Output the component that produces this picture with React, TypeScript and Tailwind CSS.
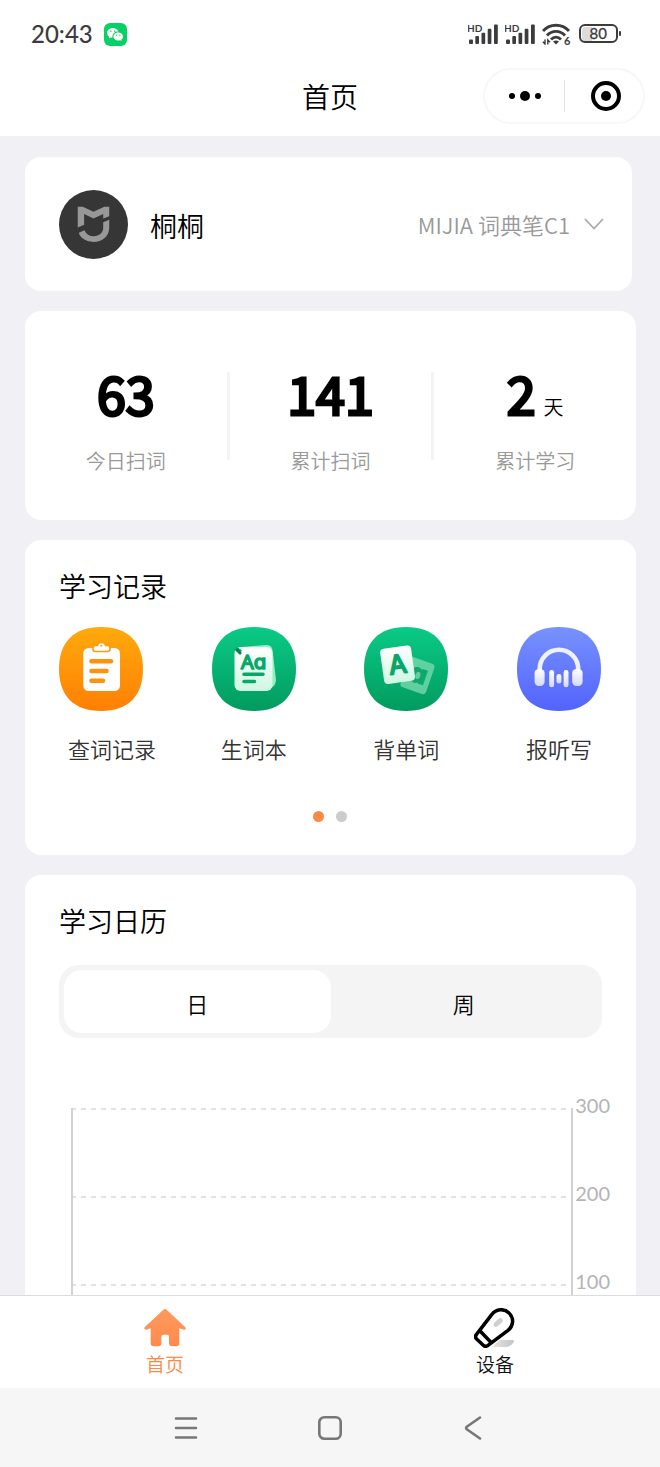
import React, { useState } from "react";
import { BsWechat } from "react-icons/bs";

const SQUIRCLE =
  "M42 0 C69 0 84 15 84 42 C84 69 69 84 42 84 C15 84 0 69 0 42 C0 15 15 0 42 0 Z";

const SignalIcon: React.FC = () => (
  <svg className="w-[30px] h-[22px]" viewBox="0 0 30 22" fill="#3c3c3e">
    <text x="-1" y="8.5" fontSize="10" fontWeight="700" fontFamily="Lato, sans-serif">
      HD
    </text>
    <rect x="1" y="16.5" width="4" height="4.5" rx="1" />
    <rect x="7.3" y="13" width="3.7" height="8" rx="1" />
    <rect x="13.5" y="9.7" width="3.7" height="11.3" rx="1" />
    <rect x="19.7" y="5.7" width="3.7" height="15.3" rx="1" />
    <rect x="26" y="1.5" width="3.8" height="19.5" rx="1" />
  </svg>
);

const WifiIcon: React.FC = () => (
  <svg className="w-[30px] h-[22px]" viewBox="0 0 30 22" fill="none" stroke="#3c3c3e" strokeWidth="2.8">
    <path d="M1 8 C8 0.3 20 0.3 27 8" />
    <path d="M5 12.5 C10 7 18 7 23 12.5" />
    <path d="M9 16.5 C12 13.3 16 13.3 19 16.5" />
    <path d="M11 18.5 Q14 16.4 17 18.5 L14 21.5 Z" fill="#3c3c3e" stroke="none" />
    <path d="M3 16.5 V21 L0.8 18.8 M5.8 21.5 V17 L8 19.2" strokeWidth="1.4" />
    <text x="22" y="21.5" fontSize="11" fontWeight="700" fill="#3c3c3e" stroke="none" fontFamily="Lato, sans-serif">
      6
    </text>
  </svg>
);

const BatteryIcon: React.FC = () => (
  <svg className="w-[43px] h-[20px]" viewBox="0 0 43 20">
    <path d="M6 3 H13 V17 H6 Q3 17 3 14 V6 Q3 3 6 3 Z" fill="#dcdcdc" />
    <rect x="1" y="1" width="37" height="17" rx="5" fill="none" stroke="#3c3c3e" strokeWidth="2" />
    <rect x="40" y="7" width="2" height="5" rx="1" fill="#3c3c3e" />
    <text
      x="19.3"
      y="15"
      fontSize="15"
      fontWeight="400"
      textAnchor="middle"
      fill="#3c3c3e"
      stroke="#3c3c3e"
      strokeWidth="0.3"
      fontFamily="Lato, sans-serif"
    >
      80
    </text>
  </svg>
);

const MijiaLogo: React.FC = () => (
  <svg className="w-[69px] h-[69px] shrink-0" viewBox="117 118 206 206">
    <circle cx="220" cy="221" r="103" fill="#363636" />
    <g fill="#989898">
      <path d="M173 168 H188 L220 183 L252 168 H267 V196 L249 203 V190 L220 203 L192 190 V222 L173 230 Z" />
      <path d="M249 214 L267 207 V230 C267 257 246 273 220 273 C198 273 181 262 176 246 L193 238 C198 250 208 256 220 256 C238 256 249 246 249 230 Z" />
    </g>
  </svg>
);

const RecordIcon: React.FC = () => (
  <svg className="w-[84px] h-[84px]" viewBox="0 0 84 84">
    <defs>
      <linearGradient id="orange" x1="0" y1="0" x2="0" y2="1">
        <stop offset="0" stopColor="#ffaa0c" />
        <stop offset="1" stopColor="#ff7f04" />
      </linearGradient>
    </defs>
    <path d={SQUIRCLE} fill="url(#orange)" />
    <rect x="24.3" y="21" width="36.7" height="43" rx="5.5" fill="#fff" />
    <path
      d="M36.5 18.5 H38.5 C39 14.5 46 14.5 46.5 18.5 H48.5 Q51 18.5 51 21 V22 Q51 24.5 48.5 24.5 H36.5 Q34 24.5 34 22 V21 Q34 18.5 36.5 18.5 Z"
      fill="#fff"
      stroke="#ff9c0b"
      strokeWidth="1.6"
    />
    <circle cx="42.4" cy="18.8" r="1" fill="#ff9c0b" />
    <path d="M32.5 34.2 H52 M32.5 44 H47.5 M32.5 53.8 H44" stroke="#ff920a" strokeWidth="4.6" strokeLinecap="round" />
  </svg>
);

const WordBookIcon: React.FC = () => (
  <svg className="w-[84px] h-[84px]" viewBox="0 0 84 84">
    <defs>
      <linearGradient id="green" x1="0" y1="0" x2="0" y2="1">
        <stop offset="0" stopColor="#0acb86" />
        <stop offset="1" stopColor="#029a5f" />
      </linearGradient>
      <linearGradient id="sheet" x1="0" y1="0" x2="0" y2="1">
        <stop offset="0" stopColor="#ffffff" />
        <stop offset="1" stopColor="#cdf8e2" />
      </linearGradient>
    </defs>
    <path d={SQUIRCLE} fill="url(#green)" />
    <path d="M30 20 L54 18 Q60 18 60.5 23 L64 53 Q64 58 59 61 L48 63 Z" fill="#8ff0c0" />
    <rect x="22.5" y="20" width="38" height="44" rx="6" fill="url(#sheet)" />
    <path d="M21.5 22 L24 19 L30 23.5 L27.5 27 Z" fill="#07b877" />
    <path d="M25.2 22.8 L28 26" stroke="#04804f" strokeWidth="3" strokeLinecap="round" />
    <text
      x="29"
      y="42"
      fontSize="20"
      fontWeight="400"
      fill="#08a869"
      stroke="#08a869"
      strokeWidth="1.6"
      strokeLinejoin="round"
      fontFamily="'Open Sans', 'DejaVu Sans', sans-serif"
    >
      Aɑ
    </text>
    <path d="M32 47.3 H51 M32 54.5 H42.5" stroke="#08a869" strokeWidth="3.6" strokeLinecap="round" />
  </svg>
);

const FlashCardIcon: React.FC = () => (
  <svg className="w-[84px] h-[84px]" viewBox="0 0 84 84">
    <path d={SQUIRCLE} fill="url(#green)" />
    <g transform="rotate(19 53.5 48.5)">
      <rect x="40" y="32.5" width="27" height="32" rx="3.5" fill="#7ddcb0" fillOpacity="0.75" />
      <text
        x="54"
        y="55.5"
        fontSize="26"
        fontWeight="700"
        textAnchor="middle"
        fill="#10a76b"
        stroke="#10a76b"
        strokeWidth="1"
        fontFamily="'Open Sans', 'DejaVu Sans', sans-serif"
      >
        ɑ
      </text>
    </g>
    <g transform="rotate(-8 33.6 37.7)">
      <rect x="18" y="20" width="31.2" height="35.5" rx="4" fill="url(#sheet)" />
      <text
        x="33.6"
        y="46.5"
        fontSize="26"
        fontWeight="400"
        textAnchor="middle"
        fill="#0aa568"
        stroke="#0aa568"
        strokeWidth="1.8"
        strokeLinejoin="round"
        fontFamily="Inter, sans-serif"
      >
        A
      </text>
    </g>
  </svg>
);

const DictationIcon: React.FC = () => (
  <svg className="w-[84px] h-[84px]" viewBox="0 0 84 84">
    <defs>
      <linearGradient id="blue" x1="0" y1="0" x2="0" y2="1">
        <stop offset="0" stopColor="#7892fd" />
        <stop offset="1" stopColor="#5263fd" />
      </linearGradient>
      <linearGradient id="cup" x1="0" y1="0" x2="0" y2="1">
        <stop offset="0" stopColor="#ffffff" />
        <stop offset="1" stopColor="#d3d9ff" />
      </linearGradient>
    </defs>
    <path d={SQUIRCLE} fill="url(#blue)" />
    <path d="M22.7 45 V42 A19.2 19.2 0 0 1 61.2 42 V45" fill="none" stroke="#eef1ff" strokeWidth="4.6" />
    <g fill="url(#cup)">
      <rect x="17.6" y="42" width="10" height="17" rx="4.2" />
      <rect x="55.2" y="42" width="10.4" height="17" rx="4.2" />
      <rect x="32.2" y="43" width="4.9" height="17.3" rx="2.4" />
      <rect x="39.5" y="47" width="4.9" height="9.6" rx="2.4" />
      <rect x="46.6" y="43" width="4.9" height="17.3" rx="2.4" />
    </g>
  </svg>
);

const HomeIcon: React.FC = () => (
  <svg className="w-[42px] h-[40px]" viewBox="132 54 126 120">
    <defs>
      <linearGradient id="home" x1="0" y1="0" x2="0" y2="1">
        <stop offset="0" stopColor="#ff9a60" />
        <stop offset="1" stopColor="#ff8a4c" />
      </linearGradient>
    </defs>
    <path
      d="M190 59 Q195 55 200 59 L256 112 Q260 119 252 119 L238 115 V159 Q238 169 228 169 H216 Q207 169 207 160 V140 Q207 134 201 134 H190 Q184 134 184 140 V160 Q184 169 175 169 H162 Q152 169 152 159 V115 L139 119 Q130 119 134 112 Z"
      fill="url(#home)"
    />
  </svg>
);

const PenIcon: React.FC = () => (
  <svg className="w-[42px] h-[40px]" viewBox="1124 54 126 120" fill="none">
    <defs>
      <linearGradient id="shade" x1="0" y1="0" x2="1" y2="0">
        <stop offset="0" stopColor="#e6e6e6" />
        <stop offset="1" stopColor="#c4c4c4" />
      </linearGradient>
    </defs>
    <path d="M1178 170 L1202 150 H1240 Q1246 150 1243 157 Q1236 170 1218 171 Z" fill="url(#shade)" />
    <path d="M1190 103 L1203 92" stroke="#d0d0d0" strokeWidth="15" strokeLinecap="round" />
    <g stroke="#000" strokeWidth="10.5" strokeLinejoin="round" strokeLinecap="round">
      <path d="M1131 134 L1177 74 C1190 56 1215 54 1230 70 C1245 86 1242 108 1226 121 L1166 166 C1161 170 1155 169 1151 165 L1132 147 C1128 143 1128 138 1131 134 Z" />
      <path d="M1143 124 L1174 156" />
    </g>
  </svg>
);

const STATS = [
  { value: "63", unit: "", label: "今日扫词" },
  { value: "141", unit: "", label: "累计扫词" },
  { value: "2", unit: "天", label: "累计学习" },
];

const SHORTCUTS = [
  { label: "查词记录", Icon: RecordIcon },
  { label: "生词本", Icon: WordBookIcon },
  { label: "背单词", Icon: FlashCardIcon },
  { label: "报听写", Icon: DictationIcon },
];

const TICKS = [300, 200, 100];

const Header: React.FC = () => (
  <header className="bg-white pb-3 shrink-0">
    <div className="h-[68px] flex items-center justify-between pl-[31px] pr-[38px]">
      <div className="flex items-center gap-[11px]">
        <span className="font-[Lato] text-[24px] leading-8 font-medium text-[#3c3c3e]">20:43</span>
        <span className="w-[23px] h-[23px] rounded-md bg-[#07d166] text-white flex items-center justify-center">
          <BsWechat className="w-4 h-4" />
        </span>
      </div>
      <div className="flex items-center gap-[7px]">
        <SignalIcon />
        <SignalIcon />
        <WifiIcon />
        <BatteryIcon />
      </div>
    </div>
    <div className="grid grid-cols-[1fr_auto_1fr] items-center pr-[15px]">
      <h1 className="col-start-2 pl-[15px] text-[28px] leading-10">首页</h1>
      <div className="justify-self-end h-14 w-[162px] rounded-full border-2 border-[#f7f7f7] flex items-center">
        <button aria-label="更多" className="w-[79px] flex items-center justify-center gap-[5px]">
          <span className="w-1.5 h-1.5 rounded-full bg-black" />
          <span className="w-2.5 h-2.5 rounded-full bg-black" />
          <span className="w-1.5 h-1.5 rounded-full bg-black" />
        </button>
        <span className="w-px h-8 bg-[#e5e5e5]" />
        <button aria-label="关闭" className="flex-1 pl-1 flex items-center justify-center">
          <span className="w-[30px] h-[30px] rounded-full border-4 border-black flex items-center justify-center">
            <span className="w-2.5 h-2.5 rounded-full bg-black" />
          </span>
        </button>
      </div>
    </div>
  </header>
);

const ProfileCard: React.FC = () => (
  <section className="mr-1 h-[134px] bg-white rounded-2xl flex items-center justify-between pl-[34px] pr-7">
    <div className="flex items-center gap-[22px]">
      <MijiaLogo />
      <span className="pt-1 text-[27px] leading-10">桐桐</span>
    </div>
    <label className="flex items-center gap-[14px] text-[#999]">
      <select
        aria-label="设备"
        className="appearance-none field-sizing-content bg-transparent text-[22px] leading-8"
      >
        <option>MIJIA 词典笔C1</option>
      </select>
      <svg className="w-5 h-3" viewBox="0 0 20 12" fill="none" stroke="#aaa" strokeWidth="1.8">
        <path d="M1 1 L10 10.5 L19 1" />
      </svg>
    </label>
  </section>
);

const StatsCard: React.FC = () => (
  <section className="h-[209px] bg-white rounded-2xl flex items-center">
    {STATS.map((s, i) => (
      <React.Fragment key={s.label}>
        {i > 0 && <span className="w-[3px] h-[88px] bg-[#f4f4f4]" />}
        <div className="flex-1 flex flex-col items-center gap-[22px] pt-1">
          <div className="flex items-baseline gap-2 h-16">
            <span className="text-[52px] leading-16 font-normal [-webkit-text-stroke:3px_#000]">{s.value}</span>
            {s.unit && <span className="text-[20px]">{s.unit}</span>}
          </div>
          <span className="text-[20px] leading-7 text-[#999]">{s.label}</span>
        </div>
      </React.Fragment>
    ))}
  </section>
);

const RecordsCard: React.FC = () => (
  <section className="bg-white rounded-2xl pl-[34px] pr-[35px] pt-[26px] pb-[33px]">
    <h2 className="text-[27px] leading-10">学习记录</h2>
    <div className="mt-[21px] flex justify-between">
      {SHORTCUTS.map(({ label, Icon }) => (
        <button key={label} className="w-[84px] flex flex-col gap-[21px] text-left">
          <Icon />
          <span className="pl-[9px] text-[22px] leading-8 text-[#333] whitespace-nowrap">{label}</span>
        </button>
      ))}
    </div>
    <div className="mt-[47px] flex justify-center gap-3">
      <span className="w-[11px] h-[11px] rounded-full bg-[#fb8a45]" />
      <span className="w-[11px] h-[11px] rounded-full bg-[#ccc]" />
    </div>
  </section>
);

const Chart: React.FC = () => (
  <div className="mt-[59px] ml-3 -mr-2 flex justify-between">
    <svg className="flex-1 min-w-0 h-[276px] pt-[11px]">
      {TICKS.map((t, i) => (
        <line
          key={t}
          x1="0"
          x2="100%"
          y1={1 + i * 88}
          y2={1 + i * 88}
          stroke="#e2e2e2"
          strokeWidth="2"
          strokeDasharray="5 5"
        />
      ))}
      <rect x="0" y="0" width="2" height="100%" fill="#d2d2d2" />
      <svg x="100%" overflow="visible">
        <rect x="-2" y="0" width="2" height="265" fill="#d2d2d2" />
      </svg>
    </svg>
    <div className="w-[37px] flex flex-col items-end font-[Lato] font-normal text-[20px] leading-4 text-[#b4b4b4]">
      {TICKS.map((t) => (
        <span key={t} className="h-[88px]">
          {t}
        </span>
      ))}
    </div>
  </div>
);

const CalendarCard: React.FC = () => {
  const [range, setRange] = useState<"日" | "周">("日");

  return (
    <section className="bg-white rounded-2xl px-[34px] pt-[26px] pb-8">
      <h2 className="text-[27px] leading-10">学习日历</h2>
      <div className="mt-6 h-[73px] p-[5px] rounded-[20px] bg-[#f4f4f4] flex">
        {(["日", "周"] as const).map((r) => (
          <button
            key={r}
            onClick={() => setRange(r)}
            className={`flex-1 pt-0.5 rounded-[18px] text-[22px] leading-8 ${range === r ? "bg-white" : ""}`}
          >
            {r}
          </button>
        ))}
      </div>
      <Chart />
    </section>
  );
};

const TabBar: React.FC = () => (
  <nav className="shrink-0 bg-white border-t border-[#dcdcdc] flex pt-3 pb-[10px] text-[19px] leading-7">
    <a href="#home" className="flex-1 flex flex-col items-center gap-0.5 text-[#fb8a45]">
      <HomeIcon />
      首页
    </a>
    <a href="#device" className="flex-1 flex flex-col items-center gap-0.5 text-[#111]">
      <PenIcon />
      设备
    </a>
  </nav>
);

const SystemBar: React.FC = () => (
  <div className="shrink-0 h-[79px] bg-[#f6f6f6] flex items-center justify-center gap-[120px]">
    <button aria-label="最近任务">
      <svg className="w-6 h-6" viewBox="0 0 24 24" stroke="#777" strokeWidth="2.6" strokeLinecap="round">
        <path d="M2 2.5 H22 M2 12 H22 M2 21.5 H22" />
      </svg>
    </button>
    <button aria-label="主屏幕">
      <svg className="w-6 h-6" viewBox="0 0 24 24" fill="none" stroke="#777" strokeWidth="2.6">
        <rect x="1.3" y="1.3" width="21.4" height="21.4" rx="5" />
      </svg>
    </button>
    <button aria-label="返回">
      <svg className="w-6 h-6" viewBox="0 0 24 24" fill="none" stroke="#777" strokeWidth="2.6" strokeLinecap="round">
        <path d="M18 1.5 L4.8 10.8 Q3.4 12 4.8 13.2 L18 22.5" />
      </svg>
    </button>
  </div>
);

export default function App() {
  return (
    <div className="h-screen flex flex-col bg-[#f0f0f5] text-black font-[350] font-['Noto_Sans_CJK_SC',sans-serif]">
      <Header />
      <main className="flex-1 min-h-0 overflow-y-auto [scrollbar-width:none] pl-[25px] pr-6 pt-[21px] pb-5">
        <div className="flex flex-col gap-5">
          <ProfileCard />
          <StatsCard />
          <RecordsCard />
          <CalendarCard />
        </div>
      </main>
      <TabBar />
      <SystemBar />
    </div>
  );
}
